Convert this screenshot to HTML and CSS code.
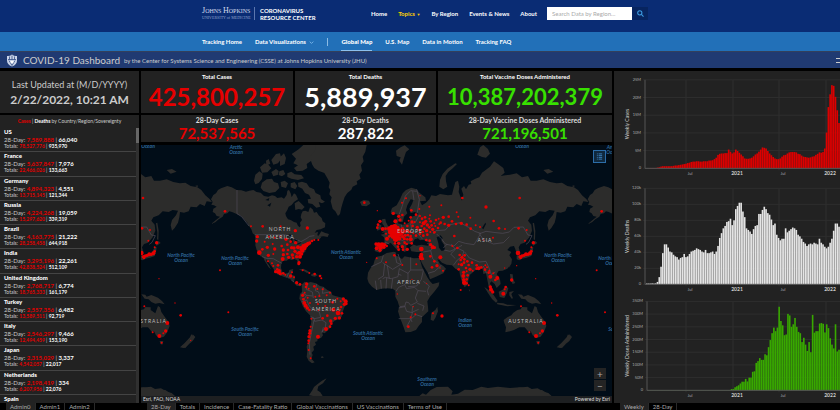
FILE: index.html
```html
<!DOCTYPE html>
<html lang="en">
<head>
    <meta charset="UTF-8">
    <meta name="viewport" content="width=device-width, initial-scale=1.0">
    <title>COVID-19 Map - Johns Hopkins Coronavirus Resource Center</title>
    <link rel="stylesheet" href="styles.css">
</head>
<body>
    <header class="site-header">
        <div class="container">
            <a class="logo" href="#">
                <span class="logo-name"><span class="big">J</span>OHNS <span class="big">H</span>OPKINS</span>
                <span class="logo-sub">UNIVERSITY of MEDICINE</span>
            </a>
            <div class="site-title">CORONAVIRUS<br>RESOURCE CENTER</div>
            <nav class="main-nav">
                <a href="#">Home</a>
                <a href="#" class="current">Topics <span class="caret">▼</span></a>
                <a href="#">By Region</a>
                <a href="#">Events &amp; News</a>
                <a href="#">About</a>
            </nav>
            <form class="search">
                <input type="text" aria-label="Search Data by Region" placeholder="Search Data by Region...">
                <button type="button" aria-label="Search">
                    <svg viewBox="0 0 10 10" width="7" height="7"><circle cx="4" cy="4" r="3"/><path d="M6.300 6.300L9.300 9.300"/></svg>
                </button>
            </form>
        </div>
    </header>

    <nav class="sub-nav">
        <div class="container">
            <a href="#">Tracking Home</a>
            <a href="#">Data Visualizations <svg class="chevron" viewBox="0 0 8 5" width="5" height="3"><path d="M1 1l3 3 3-3"/></svg></a>
            <span class="divider"></span>
            <a href="#" class="active">Global Map</a>
            <a href="#">U.S. Map</a>
            <a href="#">Data in Motion</a>
            <a href="#">Tracking FAQ</a>
        </div>
    </nav>

    <div class="dash-title">
        <svg class="shield" viewBox="0 0 24 26" width="12" height="13">
            <path d="M2 4Q7 5 12 1q5 4 10 3v9q0 8-10 12Q2 21 2 13z" fill="#c9d3e8"/>
            <path d="M4 11h16M12 3v8M7 5v6M17 5v6M6 13l6 10 6-10" fill="none" stroke="#29457f" stroke-width="1.500"/>
            <path d="M9 14h6v3l-3 2-3-2z" fill="#fff"/>
        </svg>
        <h1>COVID-19 Dashboard</h1>
        <span>by the Center for Systems Science and Engineering (CSSE) at Johns Hopkins University (JHU)</span>
        <button class="menu" type="button" aria-label="Menu"></button>
    </div>

    <main class="dashboard">
        <section class="col-left">
            <div class="panel updated">
                <div>Last Updated at (M/D/YYYY)</div>
                <strong>2/22/2022, 10:21 AM</strong>
            </div>
            <div class="panel countries">
                <p><b class="red">Cases</b> | <b class="white">Deaths</b> by Country/Region/Sovereignty</p>
                <ul id="countryList"></ul>
            </div>
            <div class="tabs">
                <button type="button" class="active">Admin0</button>
                <button type="button">Admin1</button>
                <button type="button">Admin2</button>
            </div>
        </section>

        <section class="col-center">
            <div class="stats">
                <div class="panel stat total cases"><h2>Total Cases</h2><div class="num">425,800,257</div></div>
                <div class="panel stat total deaths"><h2>Total Deaths</h2><div class="num">5,889,937</div></div>
                <div class="panel stat total doses"><h2>Total Vaccine Doses Administered</h2><div class="num">10,387,202,379</div></div>
                <div class="panel stat cases"><h2>28-Day Cases</h2><div class="num">72,537,565</div></div>
                <div class="panel stat deaths"><h2>28-Day Deaths</h2><div class="num">287,822</div></div>
                <div class="panel stat doses"><h2>28-Day Vaccine Doses Administered</h2><div class="num">721,196,501</div></div>
            </div>

            <div class="map">
                <svg viewBox="0 0 471 258" preserveAspectRatio="xMidYMid slice">
                    <g transform="scale(.33333) translate(-3 -15)">
                        <g id="world">
                            <!-- americas -->
                            <g class="land">
                                <path d="M213 178L220 165 228 160 234 150 243 145 262 138 275 142 290 150 304 151 318 155 328 152 340 150 350 156 362 158 372 168 385 170 396 166 405 168 412 174 425 172 432 176 440 165 442 152 447 150 452 160 455 172 462 160 468 164 474 178 462 186 455 195 446 200 442 210 436 220 438 228 444 238 452 240 462 246 470 248 473 256 478 262 482 258 480 248 486 240 482 232 484 222 488 214 496 212 505 216 510 202 518 208 522 218 530 216 536 226 545 234 548 244 556 250 555 262 542 268 530 270 524 278 534 276 532 286 545 290 538 298 528 296 516 305 508 308 504 318 496 326 497 334 488 342 478 350 476 356 481 368 480 376 475 372 471 360 462 357 455 360 447 357 440 362 430 362 424 370 423 384 427 395 435 401 446 398 448 390 460 387 456 398 455 405 464 407 465 414 462 425 466 432 474 432 485 434 480 439 470 437 463 430 455 420 444 414 435 412 425 408 412 403 404 395 401 387 392 376 384 364 378 357 381 368 387 376 393 388 386 382 380 372 374 362 370 352 360 348 356 338 350 330 346 316 347 302 344 285 338 280 334 268 327 258 322 248 312 238 304 228 290 222 276 216 268 214 262 220 252 222 248 230 236 238 226 247 213 252 228 240 240 230 230 228 225 220 218 216 220 206 230 200 222 196 214 194 218 186z"/>
                                <path d="M515 15h165l-4 20-8 15 3 14-8 12 3 16-8 12 4 12-12 8 2 9-14 7-4 9-12 10-8 12-6 18-4 14-4 19-6 6-8-14-8-8-6-22 3-12-7-9 3-13-5-8 3-14-6-12-10-17-18-7-12-8-6-10-8-22z"/>
                                <path d="M455 42L476 28 490 15 528 15 524 34 512 48 514 62 500 72 502 84 488 92 470 94 462 84 474 76 460 70 468 56zM394 60l14-18 12-2 4 16-10 14-14 4zM420 52l12-12 6 14-4 18-14 6zM378 62l8-5 5 14-12 6zM360 82l14-12 12 5 8 10-12 12-16 1zM342 122l4-18 12-10 10 7-2 16-10 12-10 4zM366 128l14-10 16-2 6 10 12 4 4 14-12 12-18 3-18-6-8-10zM394 96l14-9 8 6-2 11-14 5zM418 94l12-4 6 12-10 7-10-4zM422 126l12-4 10 8-6 14-14-4zM442 100l12-5 10 8 20 2 8 10-18 5-20-4-12-5zM452 130l12-4 8 12-6 10-14-6zM474 128l12-3 14 5 8 12 14 6 5 11 14 7 2 11 12 8-9 5-10-4 5 14-12 3-12-11-12-2-2-12 10-2-6-12-12-5-8-13-12-6zM464 190l12-7 10 10 8 8-8 8-10-2-10 3z"/>
                                <path d="M534 290l10-16 10 4 13 4-4 9-12-2zM660 186l11-6 16 2 4 9-12 8-14-2zM476 389l14-3 12 6 10 7-12-1-10-6zM514 402l10-2 9 5-8 5-11-2zM538 405l6-1v4h-5z"/>
                                <path d="M485 434L494 425 503 428 512 426 528 430 540 438 550 440 562 450 574 455 577 465 586 468 598 471 610 474 621 482 622 490 613 502 608 516 605 530 596 538 584 542 576 550 572 562 562 572 554 580 546 577 549 586 543 594 533 596 532 604 525 606 528 614 520 620 522 630 515 638 518 645 514 656 524 667 516 670 506 662 500 650 502 634 500 620 505 606 506 590 511 576 511 560 514 545 510 526 498 514 488 498 484 486 478 476 480 462 486 456z"/>
                                <path d="M120 622l14-13 16-17 4-9 8 8-8 12-10 8-12 13zM519 768l-12-2 10-15 5-10 12-10 12-9 14-7-11 15-14 9-3 12 9 6 7 11zM3 743l30-3 12 7 18-2 17 10 15 4 10 9H3zM543 650l6-1 2 4-7 1z"/>
                            </g>
                            <path class="lake" d="M436 288l14-5 10 7-14 2zM452 296l5-2 1 14-6 2zM462 293l12 6-4 8-6-6zM472 311l12-5-2 4-10 4zM382 196l12-8-4 12zM376 180l12-6-2 8zM418 262l6 2-2 12z"/>
                            <path class="border" d="M291 150v71l14 9 22 28M345 284h88l18 6 22 10 10 5 18-10 8-6 14-2M366 350l14 5 20 1 12 7 14 7M446 398l-6 14M455 405l-10 9M462 425l-8-4M503 430l-4 18 18 8 3 18M530 432l-4 20 10 4 4 14M550 442l-3 18 22-4M486 458l14 8 18 2M500 466l-10 14M484 486l16-6 8 18 10 10 20 8 4 16-18 4-8-2M512 530l10 4 2 10 22-4 12 8-2 14-10 14M522 540l-8 40-6 30 2 34M546 578l4-16"/>
                            <g id="westDots" class="dots"></g>

                            <!-- europe, africa, asia, oceania -->
                            <g transform="translate(690 0)">
                                <g class="land">
                                    <path d="M20 350L36 347 50 339 72 335 79 338 76 346 88 352 96 357 104 349 118 352 132 355 148 354 152 366 156 380 165 398 172 412 180 424 188 432 208 427 206 438 194 454 180 470 172 484 174 500 175 514 166 522 156 532 156 546 146 558 138 570 122 576 106 577 101 562 95 546 90 534 84 514 88 500 83 484 76 470 76 452 68 446 50 445 34 446 20 450 6 440-4 428-8 416-6 398 2 384 10 374 14 360zM184 518l12-8 6-10 2 14-8 20-6 9-8-4z"/>
                                    <path d="M14 333L16 320 14 310 36 310 44 306 42 292 32 284 42 282 44 276 56 272 62 262 74 256 76 244 84 232 86 242 84 250 98 254 114 250 120 244 120 232 132 228 146 222 134 216 122 220 118 206 126 192 130 180 122 178 112 196 108 210 112 220 102 230 98 246 92 246 86 226 78 222 66 226 62 216 66 204 80 196 90 178 98 160 108 150 124 143 140 148 148 158 166 172 168 182 150 184 156 196 168 188 178 178 184 166 198 168 210 162 234 166 246 164 250 148 256 126 264 122 268 140 266 156 272 172 276 182 280 164 274 146 282 138 288 148 296 134 304 132 302 124 316 116 328 112 336 98 350 88 360 80 372 64 384 72 400 84 404 98 392 108 406 106 420 104 440 100 456 112 474 108 482 122 500 122 520 118 540 126 560 130 576 128 592 138 612 142 624 150 636 166 648 176 656 186 640 184 634 198 620 192 610 202 592 200 586 214 572 218 560 216 558 232 554 248 544 264 536 272 532 256 536 240 548 226 554 212 538 210 526 216 508 214 496 226 480 232 474 242 484 254 486 272 478 292 464 308 452 312 446 322 450 336 440 342 436 328 432 318 420 320 412 330 424 336 418 346 426 358 424 372 412 386 398 392 386 393 380 402 390 418 392 432 380 444 374 432 364 424 360 430 366 446 374 460 366 458 356 440 352 420 348 400 340 402 338 388 328 382 314 392 300 404 296 418 292 434 284 442 276 426 270 406 268 392 256 386 246 376 230 374 216 368 208 360 202 358 210 372 220 378 228 386 220 400 198 410 180 418 174 400 162 380 154 366 152 350 154 336 140 336 124 334 120 322 130 314 118 312 108 314 112 332 102 336 96 324 88 314 76 302 70 306 82 316 92 328 84 332 74 322 62 308 48 314 40 328 30 338z"/>
                                    <path d="M36 238l10-2 2 10 6 12 5 8-4 8-20 5 8-8-4-6 4-6-6-8zM18 262l8-9 8 3-1 11-11 5zM78 32l14-10 12-6 14 12-10 8-6 18-6 20-8-12 4-10-12-4zM208 140l2-20 8-18 14-16 24-16 5 2-12 12-14 12-8 12 1 16 4 16-12 8zM322 44l8-22 10-7 14 12 6 14-12 12-12-2zM520 90l16-3 14 8-18 6zM605 138l8-2v6z"/>
                                    <path d="M488 250l4-2 4 24-1 28-4-2 1-20zM484 308l12-5 6 6-12 8zM440 346l14 2 10-4 12-6 8-18 6 2-2 14-4 12-14 5-14 3-8 5-8-3zM417 376l4-3-1 10zM420 402l8 1 2 16 6 10-8 3-6-12zM343 441l12 8 16 16 12 18-5 5-12-11-12-18zM380 488l20 2 12 4 28 1-28 4-30-6zM386 455l12-6 9-12 8 8-4 14-8 15-14-3zM418 456l14-3-8 9 5 13-4 1-7-10zM444 463l12 1 4 6 14-5 20 8 12 10 8 10-16-4-12 2-12-5-8-8-12-2z"/>
                                    <path d="M402 546L401 540 412 532 424 526 430 518 442 510 452 508 456 501 472 502 472 510 486 520 494 498 500 502 504 516 514 530 526 546 529 558 522 576 512 590 498 594 488 586 482 574 476 576 464 562 448 562 432 570 420 574 406 577 408 562zM499 603h11l-3 11-6-2zM566 622l14-13 16-17 2-9 8 8-8 12-10 8-12 13zM148 768l10-8 10 4 14-14 18-9 34-1 14 14-4 10 20-3 20-12 24 1 26-10 20 4 30-4 36 4 30-2 40 6 26 2 14 9 10 9zM296 448l4 2-1 5z"/>
                                </g>
                                <path class="lake" d="M126 312l8-14 10-3 6 6 10-2 18 10-4 8-20-3-14 3zM200 292l12-6 6 8-4 8 8 12 3 16-10 3-8-10-2-14zM336 264l10-16 2 4-8 16z"/>
                                <path class="border" d="M40 346l-6 20-30 14M38 368l30 20 26-16-10-30M76 346l4 22 14 6M122 352v38h38M122 390l-8 10-26-14M44 372l-4 36-16 10M88 386l-4 24-20 6-18-4-8 4M114 398v20l-10 16-18 8-8 12M160 392l-6 26-14 20-26 2M20 450l-4-28M34 446l-2-26M48 446l2-32M64 446l4-30M104 434l6 12 24-4 10 10-8 22 6 12-20 10-6-8-8-2-4 14-18 4M160 424l18 14-6 14 4 14M144 452l24 2M90 500l14-2 6 16 16 4 2-20M86 536h36l4 10M110 560l12-22 16-14 18 6M122 536l6-20 18-8M142 490l20 8-4 14M52 376l6 40M94 406l-10-4"/>
                                <path class="border" d="M88 222l8-22 10-32 16-16 18 2M132 180l-4-26M140 148l8 30-6 40M44 306l14 6M60 266l4 20 10 14M78 258l8 20-10 16M94 254l4 22 24-2M98 276l-8 22 16 8M122 250l4 24 16 4 16 20M110 286l18 10M148 224l-10 20-10 10M190 282l8-10 28-2 14-16 30-6 26 14 18 12 18 6-10 18-10 16-26-4-20-6-14 14-26-6-12-16-14-14M326 282l22-8 30 4 20 2 20-4 14-14 28-1 14 24 12 2-10 20-8 6M330 284l10 14 30 14 30-4 18-18M244 312l12 16-14 14 14 14M232 312l-12 12M222 330l18 4 22-10 14-8M262 324l20 10-6 16-14 10-12 16M284 336l14 18 30 12 20-2 10 22 6 18 12-8M160 336l22-4 6 24 16 14M182 332l10-14-20-8M174 400l20-6 20-18M340 378l10 22"/>
                                <g id="eastDots" class="dots"></g>
                            </g>
                        </g>
                        <use href="#world" x="-1130"/>
                        <use href="#world" x="1130"/>
                        <rect class="shelf" x="0" y="768" width="1420" height="24"/>
                    </g>
                    <g class="ocean" id="oceanLabels"></g>
                    <g class="continent" id="continentLabels"></g>
                </svg>
                <button class="legend" type="button" aria-label="Legend">
                    <svg viewBox="0 0 8 8" width="7" height="7"><path d="M1 1h1M3 1h4M1 3h1M3 3h4M1 5h1M3 5h4M1 7h1M3 7h4"/></svg>
                </button>
                <div class="zoom">
                    <button type="button" aria-label="Zoom in">+</button>
                    <button type="button" aria-label="Zoom out">−</button>
                </div>
                <div class="attribution"><span>Esri, FAO, NOAA</span><span>Powered by Esri</span></div>
            </div>

            <div class="tabs">
                <button type="button" class="active">28-Day</button>
                <button type="button">Totals</button>
                <button type="button">Incidence</button>
                <button type="button">Case-Fatality Ratio</button>
                <button type="button">Global Vaccinations</button>
                <button type="button">US Vaccinations</button>
                <button type="button">Terms of Use</button>
            </div>
        </section>

        <section class="col-right">
            <div class="panel charts">
                <svg id="casesChart" viewBox="0 0 226 110"></svg>
                <svg id="deathsChart" viewBox="0 0 226 110"></svg>
                <svg id="dosesChart" viewBox="0 0 226 110"></svg>
            </div>
            <div class="tabs">
                <button type="button" class="active">Weekly</button>
                <button type="button">28-Day</button>
            </div>
        </section>
    </main>

    <script src="script.js"></script>
</body>
</html>
```
FILE: styles.css
```css
* {
    box-sizing: border-box;
}

body {
    margin: 0;
    height: 100vh;
    display: flex;
    flex-direction: column;
    overflow: hidden;
    background-color: #000;
    color: #ccc;
    font-family: Lato, "Open Sans", sans-serif;
    font-size: 6px;
}

a {
    color: #fff;
    text-decoration: none;
}

h1, h2, p, ul {
    margin: 0;
    padding: 0;
    list-style: none;
}

button {
    font-family: inherit;
    border: 0;
    padding: 0;
    cursor: pointer;
}

/* header */
.site-header {
    background-color: #0a2c74;
    height: 32px;
    padding-bottom: 5px;
    display: flex;
}

.container {
    width: 456px;
    padding-left: 10px;
    margin: 0 auto;
    display: flex;
    align-items: center;
}

.logo {
    font-family: "Liberation Serif", serif;
    color: #d5dcec;
    width: 53px;
    border-right: 1px solid #5b76ae;
    white-space: nowrap;
}

.logo-name, .logo-sub {
    display: block;
    font-size: 6px;
    line-height: 8px;
}

.logo-name .big {
    font-size: 8px;
}

.logo-sub {
    font-size: 4px;
    line-height: 5px;
    color: #8fa2cb;
}

.site-title {
    font-size: 6px;
    line-height: 7px;
    font-weight: bold;
    color: #fff;
    padding-left: 5px;
    white-space: nowrap;
}

.main-nav {
    display: flex;
    gap: 11px;
    margin-left: auto;
    font-weight: bold;
    white-space: nowrap;
}

.main-nav .current {
    color: #ffd200;
}

.caret {
    font-size: 4px;
}

.search {
    display: flex;
    margin-left: 10px;
}

.search input {
    width: 85px;
    height: 13px;
    border: 0;
    padding: 0 5px;
    background-color: #fff;
    font-family: inherit;
    font-size: 6px;
}

.search input::placeholder {
    color: #aaa;
}

.search button {
    width: 16px;
    height: 13px;
    background-color: #07245f;
    display: flex;
    align-items: center;
    justify-content: center;
}

.search svg, .chevron {
    fill: none;
    stroke: #3d9be0;
    stroke-width: 1.5;
}

.sub-nav {
    background-color: #2270b8;
    height: 19px;
    display: flex;
}

.sub-nav .container {
    gap: 13px;
    font-weight: bold;
}

.sub-nav a {
    line-height: 17px;
    border-top: 2px solid transparent;
    border-bottom: 2px solid transparent;
    white-space: nowrap;
}

.sub-nav .active {
    border-bottom-color: #8cc0ee;
    font-weight: 900;
}

.sub-nav .chevron {
    margin-left: 2px;
    stroke: #7db8ea;
}

.divider {
    width: 1px;
    height: 8px;
    background-color: #8cbbe4;
}

.dash-title {
    background-color: #203a72;
    height: 17px;
    border-top: 1px solid #33405c;
    padding-left: 6px;
    display: flex;
    align-items: center;
    gap: 4px;
    font-size: 6px;
    white-space: nowrap;
}

.dash-title h1 {
    font-size: 10px;
    font-weight: normal;
    margin-left: 1px;
}

.menu {
    width: 4px;
    height: 5px;
    margin-left: auto;
    background-color: transparent;
    border-top: 1px solid #ccc;
    border-bottom: 1px solid #ccc;
}

/* dashboard */
.dashboard {
    flex: 1;
    min-height: 0;
    padding-top: 3px;
    display: grid;
    grid-template-columns: 139px 1fr 226px;
    grid-template-rows: 100%;
    gap: 2px;
}

.col-left, .col-center, .col-right {
    display: flex;
    flex-direction: column;
    min-width: 0;
    min-height: 0;
}

.panel {
    background-color: #222;
}

.updated {
    height: 42px;
    margin-bottom: 2px;
    display: flex;
    flex-direction: column;
    align-items: center;
    justify-content: center;
    gap: 2px;
    font-size: 9px;
    line-height: 13px;
}

.updated strong {
    font-size: 12px;
}

.countries {
    flex: 1;
    min-height: 0;
    display: flex;
    flex-direction: column;
    text-align: center;
}

.countries p {
    font-size: 5px;
    line-height: 13px;
}

.countries ul {
    flex: 1;
    min-height: 0;
    display: flex;
    flex-direction: column;
    overflow: hidden;
    text-align: left;
    border-right: 3px solid #333;
    border-image: linear-gradient(#666 16px, #303030 16px) 1;
    border-width: 0 3px 0 0;
}

.countries li {
    flex: 1;
    min-height: 0;
    padding-left: 4px;
    border-bottom: 1px solid #444;
}

.countries li:last-child {
    flex: 0 0 8px;
    border: 0;
}

.countries li b {
    color: #fff;
}

.name, .recent {
    font-size: 6px;
    line-height: 8px;
}

.name {
    color: #fff;
    font-weight: 900;
}

.recent {
    line-height: 7px;
}

.totals {
    font-size: 5px;
    line-height: 6px;
}

.red, .countries li .red {
    color: #e00000;
}

.white {
    color: #fff;
}

.tabs {
    height: 7px;
    overflow: hidden;
    display: flex;
    padding-left: 6px;
}

.tabs button {
    height: 8px;
    padding: 0 4px;
    background-color: #000;
    color: #aaa;
    font-size: 6px;
    line-height: 8px;
    border-right: 1px solid #2a2a2a;
    white-space: nowrap;
}

.tabs .active {
    background-color: #222;
}

.stats {
    display: grid;
    grid-template-columns: 152fr 141fr 174fr;
    grid-template-rows: 42px 27px;
    gap: 2px;
    margin-bottom: 3px;
}

.stat {
    text-align: center;
    white-space: nowrap;
}

.stat h2 {
    font-size: 7px;
    line-height: 10px;
    color: #ddd;
}

.stat .num {
    font-size: 15px;
    line-height: 16px;
    font-weight: bold;
}

.total h2 {
    font-size: 6px;
    line-height: 12px;
    color: #fff;
}

.total .num {
    font-size: 24px;
    line-height: 28px;
}

.total.deaths .num {
    font-size: 27px;
}

.total.doses .num {
    font-size: 22px;
}

.cases .num {
    color: #e60000;
}

.deaths .num {
    color: #fff;
}

.doses .num {
    color: #38e000;
}

/* map */
.map {
    flex: 1;
    min-height: 0;
    position: relative;
    background-color: #010d18;
    overflow: hidden;
}

.map > svg {
    display: block;
    width: 100%;
    height: 100%;
}

.land {
    fill: #2c2c2b;
}

.lake {
    fill: #010d18;
}

.border {
    fill: none;
    stroke: #514c59;
    stroke-width: 2;
}

.dots {
    fill: #e60000;
}

.shelf {
    fill: #1d1f21;
}

.ocean {
    fill: #2f6799;
    font-size: 5px;
    font-style: italic;
    font-weight: bold;
    text-anchor: middle;
}

.continent {
    fill: #bbb;
    font-size: 5px;
    letter-spacing: 1px;
    text-anchor: middle;
}

.legend {
    position: absolute;
    top: 5px;
    right: 6px;
    width: 13px;
    height: 13px;
    background-color: #10283d;
    border: 1px solid #2c6da8;
    display: flex;
    align-items: center;
    justify-content: center;
}

.legend svg {
    stroke: #3f86c4;
}

.zoom {
    position: absolute;
    right: 6px;
    bottom: 12px;
    display: flex;
    flex-direction: column;
    gap: 1px;
}

.zoom button {
    width: 12px;
    height: 11px;
    background-color: #242424;
    color: #aaa;
    font-size: 10px;
    line-height: 10px;
}

.attribution {
    position: absolute;
    left: 0;
    right: 0;
    bottom: 0;
    padding: 0 2px;
    display: flex;
    justify-content: space-between;
    font-size: 5px;
    line-height: 7px;
    color: #ddd;
}

/* charts */
.charts {
    flex: 1;
    min-height: 0;
    display: flex;
    flex-direction: column;
}

.charts svg {
    flex: 1;
    min-height: 0;
    width: 100%;
}

.grid-line {
    stroke: #2e2e2e;
}

.axis {
    stroke: #555;
}

.tick, .axis-title {
    fill: #aaa;
    font-size: 4px;
}

.tick.year {
    fill: #ccc;
    font-size: 5px;
    font-weight: bold;
}

.axis-title {
    fill: #ccc;
    font-size: 5px;
    text-anchor: middle;
}
```
FILE: script.js
```js
// name, 28-day cases, 28-day deaths, total cases, total deaths
const countries = [
    ["US", "7,589,888", "66,040", "78,527,776", "935,970"],
    ["France", "5,637,847", "7,976", "22,466,026", "133,663"],
    ["Germany", "4,894,323", "4,551", "13,715,145", "121,344"],
    ["Russia", "4,224,268", "19,059", "15,297,620", "339,319"],
    ["Brazil", "4,163,775", "21,222", "28,258,458", "644,918"],
    ["India", "3,295,196", "22,261", "42,838,524", "512,109"],
    ["United Kingdom", "2,768,717", "6,774", "18,765,333", "161,179"],
    ["Turkey", "2,557,356", "6,482", "13,589,511", "92,719"],
    ["Italy", "2,546,297", "9,466", "12,494,459", "153,190"],
    ["Japan", "2,315,029", "3,337", "4,542,057", "22,017"],
    ["Netherlands", "2,198,419", "334", "6,207,956", "22,076"],
    ["Spain"]
];

document.getElementById("countryList").innerHTML = countries.map(c => `
    <li>
        <div class="name">${c[0]}</div>
        ${c[1] ? `<div class="recent">28-Day: <b class="red">${c[1]}</b> | <b>${c[2]}</b></div>
        <div class="totals">Totals: <b class="red">${c[3]}</b> | <b>${c[4]}</b></div>` : ""}
    </li>`).join("");

// map dots: x, y, radius
const westDots = [
    [255,214,4],[333,259,3],[368,259,4],[422,259,3],[502,264,5],[466,272,5],[352,290,5],[350,303,5],[374,305,3],[387,290,3],[404,293,3],
    [421,290,3],[438,298,5],[358,338,7],[367,328,4],[382,322,5],[404,327,5],[385,346,5],[400,342,3],[398,312,3],[425,318,4],[430,330,5],
    [442,314,4],[452,305,4],[455,323,5],[444,330,4],[467,308,5],[474,322,6],[462,324,5],[465,334,5],[430,344,5],[442,342,4],[428,357,6],
    [446,352,5],[457,345,5],[459,354,4],[470,350,5],[480,350,6],[478,338,6],[485,342,5],[487,332,6],[493,324,7],[498,316,7],[504,311,6],
    [509,309,5],[490,318,6],[483,323,5],[516,303,4],[523,300,3],[535,300,3],[477,368,5],[476,372,4],[484,328,5],[472,340,4],
    [384,364,3],[396,370,3],[400,378,3],[414,376,4],[412,388,4],[407,395,5],[416,396,6],[421,401,5],[430,400,4],[436,404,3],[418,392,5],
    [452,408,5],[456,397,3],[462,412,3],[470,428,5],[480,433,4],[488,391,3],[508,399,3],[524,402,4],[540,408,4],[544,415,3],[240,391,3],
    [265,517,3],[500,432,5],[498,441,4],[506,446,3],[523,439,4],[532,447,3],[548,448,3],[570,458,3],[494,458,3],[488,466,5],[503,473,3],
    [526,470,3],[538,468,3],[560,466,3],[490,478,4],[493,489,6],[497,497,6],[502,504,5],[510,489,3],[508,510,4],[534,492,3],[556,498,3],
    [578,487,4],[592,476,3],[602,484,3],[610,477,5],[617,484,6],[618,491,5],[613,493,5],[603,501,4],[600,509,3],[580,509,6],[594,519,7],
    [606,520,4],[598,534,5],[586,535,5],[562,527,4],[548,535,4],[572,543,5],[574,551,4],[570,560,4],[558,567,6],[534,590,6],[514,536,3],
    [512,560,3],[510,572,5],[509,580,5],[507,590,5],[506,602,4],[505,610,3],[506,630,3],[512,655,3],[536,510,3],[673,188,4],[680,367,2]
];

const eastDots = [
    [22,212,2],[30,244,5],[22,263,4],[38,267,6],[47,266,4],[24,254,4],[70,220,5],[96,188,3],[108,175,3],[150,167,2],[124,211,4],[97,225,4],
    [148,207,3],[138,224,4],[86,229,5],[90,240,5],[76,244,6],[122,232,4],[116,242,3],[104,250,3],[126,246,5],[112,258,4],[128,258,4],[134,246,3],
    [58,266,7],[66,262,8],[74,260,8],[82,264,7],[70,271,9],[79,272,8],[62,276,8],[74,280,8],[83,280,8],[70,289,8],[80,290,8],[88,284,7],
    [77,298,8],[88,296,6],[90,271,6],[98,266,5],[96,279,6],[104,274,5],[112,272,5],[120,276,4],[106,286,5],[114,285,4],[103,296,5],[98,290,5],
    [51,296,6],[58,289,4],[48,281,3],[64,286,5],[122,288,4],[122,298,6],[112,298,4],[104,308,4],[110,312,4],[125,310,4],[138,287,4],[130,280,3],
    [18,312,5],[26,314,7],[36,314,7],[44,314,5],[32,322,7],[20,325,6],[30,331,5],[42,322,5],[50,318,4],[75,310,4],[86,310,5],[84,320,4],[97,320,5],
    [86,329,4],[99,329,4],[112,328,5],[20,355,3],[48,367,3],[73,346,4],[97,375,3],[154,327,7],[154,344,6],[154,354,7],[150,350,4],[139,373,3],[160,357,3],
    [181,349,4],[193,364,4],[201,377,5],[186,382,4],[211,352,6],[219,392,3],[210,384,2],[188,322,6],[194,323,4],[182,314,5],[179,302,4],[169,300,4],
    [142,262,5],[148,270,4],[155,258,4],[161,250,6],[150,247,3],[167,244,5],[172,255,5],[178,262,4],[163,266,4],[158,276,4],[170,272,5],[150,281,4],[160,287,4],
    [172,284,4],[181,276,3],[188,268,5],[193,277,4],[185,256,4],[182,244,4],[193,250,3],[196,258,3],[178,236,3],[165,232,4],[156,236,4],[150,228,3],[180,226,3],
    [178,200,3],[214,196,3],[277,174,4],[348,201,5],[449,174,4],[198,240,4],[206,236,3],[212,248,4],[220,232,5],[236,230,4],[224,252,4],[236,256,5],[204,264,4],[208,252,3],
    [246,244,4],[260,217,3],[265,230,3],[258,252,4],[274,250,5],[301,233,3],[290,254,4],[302,266,4],[317,256,3],[371,243,4],[330,261,3],[387,265,4],[405,267,3],[446,265,4],[470,270,3],[465,302,3],
    [253,288,4],[369,293,3],[247,318,3],[262,324,4],[340,300,2],[269,345,4],[276,352,5],[284,346,4],[272,360,4],[283,358,4],[282,368,4],[292,364,4],[266,373,3],[275,374,5],
    [288,384,4],[296,375,4],[266,388,4],[306,368,4],[300,388,5],[308,392,3],[281,397,5],[290,394,3],[280,408,6],[293,406,4],[281,419,5],[290,418,4],[283,428,7],[290,430,4],[296,436,3],
    [272,450,3],[320,376,4],[326,385,6],[334,382,4],[320,386,4],[346,376,3],[345,389,4],[351,382,3],[358,392,3],[361,410,6],[370,400,3],[382,414,6],[376,420,4],[356,398,4],[361,441,5],[363,449,6],[368,456,5],
    [400,461,6],[407,441,4],[404,448,3],[425,420,5],[440,377,2],[404,384,2],[497,416,2],[444,339,7],[450,350,5],[456,348,5],[462,346,5],[468,343,6],[474,343,5],[480,340,6],[484,334,4],[452,354,4],[490,308,5],[484,322,3],
    [453,499,3],[522,549,6],[517,573,5],[498,588,6],[478,577,3],[510,580,3],[505,608,3],[562,526,4],[592,601,2],[545,489,2],[216,528,5],[189,520,3],[115,560,4],[122,532,3],[136,523,3],[130,500,2],[82,462,2],[170,430,2],[126,418,2]
];

function drawDots(id, dots) {
    document.getElementById(id).innerHTML = dots.map(d => `<circle cx="${d[0]}" cy="${d[1]}" r="${d[2]}"/>`).join("");
}

drawDots("westDots", westDots);
drawDots("eastDots", eastDots);

// map labels: x, y, first line ("Ocean" goes under it)
const oceans = [
    [95, 4, "Arctic"], [7, -2, ""], [40, 112, "North Pacific"], [94, 115, "North Pacific"], [205, 109, "North Atlantic"],
    [104, 186, "South Pacific"], [227, 190, "South Atlantic"], [324, 177, "Indian"], [286, 236, "Southern"],
    [417, 112, "North Pacific"], [471, 115, "North Pacific"], [481, 186, "South Pacific"], [472, 4, "Arctic"], [381, -2, ""]
];

document.getElementById("oceanLabels").innerHTML = oceans.map(o =>
    (o[2] ? `<text x="${o[0]}" y="${o[1]}">${o[2]}</text>` : "") +
    `<text x="${o[0]}" y="${o[1] + 5}">Ocean</text>`).join("");

const continents = [
    [139, 86, "NORTH"], [139, 94, "AMERICA"], [185, 158, "SOUTH"], [185, 166, "AMERICA"],
    [268, 139, "AFRICA"], [269, 88, "EUROPE"], [344, 97, "ASIA"], [385, 178, "AUSTRALIA"], [8, 178, "AUSTRALIA"]
];

document.getElementById("continentLabels").innerHTML = continents.map(c =>
    `<text x="${c[0]}" y="${c[1]}">${c[2]}</text>`).join("");

// weekly values since january 2020
const cases = [
    0,0,.1,.1,.1,.1,.2,.3,.5,.6,.6,.6,.6,.6,.6,.7,.8,.8,.9,1,1.1,1.2,1.3,1.5,1.6,1.8,1.9,1.9,2,2,1.9,1.9,2,2,2,2.2,2.2,2.3,2.6,
    3,3.8,4.1,4.2,4.2,4.3,4.3,5.3,4.7,4.2,4.5,5.3,4.9,4.4,3.9,3.4,2.8,2.7,2.7,2.8,3,3.4,3.9,4.2,4.7,5.3,5.9,5.8,5.6,4.9,4.2,3.7,
    3.2,2.8,2.6,2.6,2.8,3.3,3.7,3.8,4.2,4.5,4.6,4.6,4.6,4.5,4.1,4,3.6,3.3,3.2,3.1,3,3.1,3.3,3.4,3.8,4.1,4.5,4.4,4.6,5.6,
    10.1,17.3,20.9,23.5,23.3,20.2,16.4,12.8
];
const deaths = [
    1,1,1,1.2,1,1.2,3,9,22,39,50,50,46,41,40,37,35,34,31,33,34,38,34,35,38,41,42,43,45,44,43,41,40,43,39,39,40,41,38,41,48,58,64,
    70,73,78,79,82,74,80,94,98,102,102,91,84,70,68,66,63,69,73,74,88,88,93,97,94,89,87,81,74,76,62,58,55,57,57,70,65,67,69,71,70,
    68,62,60,57,53,51,48,50,51,50,52,51,50,57,52,50,47,45,47,52,57,67,76,76,72
];
const doses = Array(47).fill(1).concat([
    5,5,12,16,20,27,34,34,45,35,50,50,73,75,108,115,127,120,120,142,138,170,198,225,247,233,247,329,273,256,217,220,301,295,250,
    260,285,250,230,225,190,207,180,155,190,150,297,227,233,233,263,265,262,228,260,245,205,180,165,260,153,160
]);

function drawChart(id, data, o) {
    const right = 226;
    const step = (right - o.left) / data.length;
    const top = o.base - (o.ticks.length - 1) * o.gap;
    let out = "";
    o.ticks.forEach((t, i) => {
        const y = o.base - i * o.gap;
        out += `<line class="grid-line" x1="${o.left - 3}" x2="${right}" y1="${y}" y2="${y}"/>`;
        out += `<text class="tick" x="${o.left - 5}" y="${y + 1}" text-anchor="end">${t}</text>`;
    });
    [["Jul", 72], ["2021", 119], ["Jul", 165], ["2022", 212]].forEach(([label, x]) => {
        out += `<line class="grid-line" x1="${x}" x2="${x}" y1="${top}" y2="${o.base + 2}"/>`;
        out += `<text class="tick ${label === "Jul" ? "" : "year"}" x="${x + 4}" y="${o.base + 7}" text-anchor="middle">${label}</text>`;
    });
    data.forEach((v, i) => {
        const h = v / o.unit * o.gap;
        out += `<rect x="${o.left + i * step}" y="${o.base - h}" width="${step - .15}" height="${h}" fill="${o.color}"/>`;
    });
    out += `<path class="axis" fill="none" d="M${o.left - 1} ${top}V${o.base}H${right}"/>`;
    out += `<text class="axis-title" transform="translate(15 ${(top + o.base) / 2}) rotate(-90)">${o.title}</text>`;
    document.getElementById(id).innerHTML = out;
}

drawChart("casesChart", cases, {
    title: "Weekly Cases", color: "#dc0000", left: 32, base: 97, gap: 17.7, unit: 5,
    ticks: ["0", "5M", "10M", "15M", "20M", "25M"]
});
drawChart("deathsChart", deaths, {
    title: "Weekly Deaths", color: "#e4e4e4", left: 32, base: 102, gap: 16, unit: 20,
    ticks: ["0", "20k", "40k", "60k", "80k", "100k", "120k"]
});
drawChart("dosesChart", doses, {
    title: "Weekly Doses Administered", color: "#38a800", left: 34, base: 98, gap: 12.7, unit: 50,
    ticks: ["0", "50M", "100M", "150M", "200M", "250M", "300M", "350M"]
});
```
